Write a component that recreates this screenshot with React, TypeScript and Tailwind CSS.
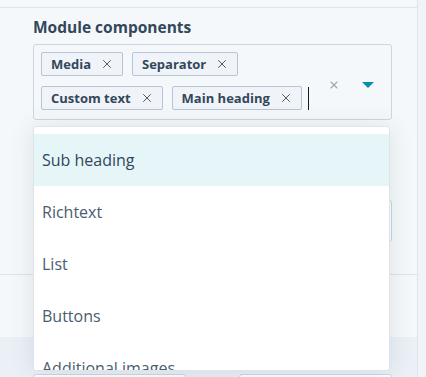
import { X } from 'lucide-react'

const font = { fontFamily: '"Open Sans", "Noto Sans", sans-serif' }

const tagRows = [
  ['Media', 'Separator'],
  ['Custom text', 'Main heading'],
]

const options = ['Sub heading', 'Richtext', 'List', 'Buttons', 'Additional images']

function Tag({ label }: { label: string }) {
  return (
    <div className="flex h-6 items-center gap-[9px] rounded-[2px] border border-[#b6c6d6] bg-[#f0f4f8] pl-[9px] pr-[8px]">
      <span className="text-[13px] font-bold leading-none text-[#33475b]">{label}</span>
      <X size={14} strokeWidth={1.5} className="text-[#33475b]" />
    </div>
  )
}

export default function App() {
  return (
    <div className="relative flex h-[377px] w-[426px] overflow-hidden bg-[#f5f8fa]" style={font}>
      <div className="flex w-[418px] shrink-0 flex-col border-r border-[#dfe3eb]">
        <div className="h-[8px] shrink-0 border-b border-[#dfe3eb]" />

        <div className="flex shrink-0 flex-col px-[33px] pt-[9px]">
          <h2 className="text-[15.5px] font-bold leading-[20px] text-[#33475b]">Module components</h2>

          <div className="mt-[7px] flex h-[76px] w-[359px] items-start rounded-[3px] border border-[#cbd6e2] bg-[#f5f8fa] pl-[7px] pt-[7px]">
            <div className="flex flex-col gap-[10px]">
              {tagRows.map((row, i) => (
                <div key={i} className="flex items-center gap-[9px]">
                  {row.map((t) => (
                    <Tag key={t} label={t} />
                  ))}
                  {i === 1 && <div className="-ml-[3px] h-[23px] w-[1.5px] bg-[#1b1b1b]" />}
                </div>
              ))}
            </div>
            <div className="ml-auto mr-[17px] mt-[27px] flex items-center gap-[22px]">
              <X size={12} strokeWidth={2.2} className="text-[#9aa6b2]" />
              <svg width="12" height="6" viewBox="0 0 12 6">
                <path d="M0 0 H12 L6 6 Z" fill="#0091ae" />
              </svg>
            </div>
          </div>

          <div className="mt-[80px] h-[42px] w-[359px] rounded-[3px] border border-[#cbd6e2] bg-white" />
        </div>

        <div className="mt-[32px] h-[63px] shrink-0 border-t border-[#dfe3eb] bg-[#f5f8fa]" />
        <div className="flex flex-1 gap-[53px] overflow-hidden bg-[#eaf0f6] px-[33px] pt-[37px]">
          <div className="h-8 w-[153px] shrink-0 rounded-[3px] border border-[#cbd6e2] bg-white" />
          <div className="h-8 w-[153px] shrink-0 rounded-[3px] border border-[#cbd6e2] bg-white" />
        </div>
      </div>
      <div className="flex-1 bg-[#f0f3f7]" />

      <div className="absolute left-[33px] top-[126px] h-[245px] w-[357px] overflow-hidden rounded-[3px] border border-[#dfe3eb] bg-white pt-[7px] shadow-[0_1px_24px_0_rgba(45,62,80,0.12)]">
        {options.map((o, i) => (
          <div
            key={o}
            className={`flex h-[52px] items-center px-[8px] text-[16px] ${
              i === 0 ? 'bg-[#e5f5f8] text-[#33475b]' : 'text-[#4a5c6e]'
            }`}
          >
            {o}
          </div>
        ))}
      </div>
    </div>
  )
}
